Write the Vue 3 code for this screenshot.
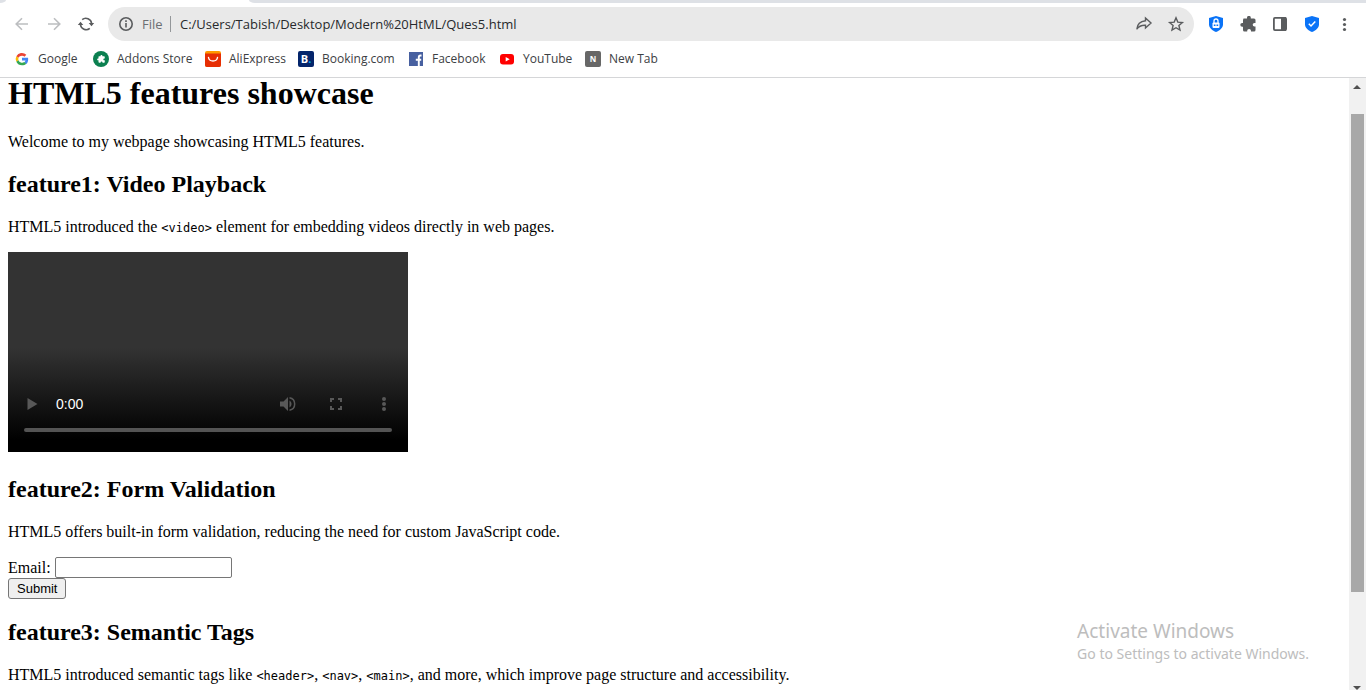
<script setup>
import { ref } from 'vue'

const address = ref('C:/Users/Tabish/Desktop/Modern%20HtML/Ques5.html')
const email = ref('')
const puzzle =
  'M3.500 2.500H7V1.800a1.900 1.900 0 0 1 3.800 0v.7H14q1.500 0 1.500 1.500v3h-1a1.800 1.800 0 0 0 0 3.600h1V14q0 1.500-1.500 1.500h-3v-.7a1.900 1.900 0 0 0-3.800 0v.7H4.500Q3 15.500 3 14v-3.300h-.8a1.900 1.900 0 0 1 0-3.800H3V4Z'
</script>

<template>
  <div class="window">
    <header class="chrome">
      <div class="tabstrip"><span class="rest left"></span><span class="tab"></span><span class="rest right"></span></div>
      <div class="toolbar">
        <button class="tool dim" aria-label="Back">
          <svg width="16" height="16" viewBox="0 0 16 16" class="line"><path d="M14 8H2.500M8 2.200 2.200 8 8 13.800" /></svg>
        </button>
        <button class="tool dim" aria-label="Forward">
          <svg width="16" height="16" viewBox="0 0 16 16" class="line"><path d="M2 8h11.500M8 2.200 13.800 8 8 13.800" /></svg>
        </button>
        <button class="tool" aria-label="Reload">
          <svg width="16" height="16" viewBox="0 0 16 16" class="line">
            <path d="M4.200 3.600A5.800 5.800 0 0 1 13.600 7.500M11.800 12.400A5.800 5.800 0 0 1 2.400 8.500" />
            <path class="solid" d="M10.700 7H16.200L13.500 10.200ZM-.2 9H5.300L2.500 5.800Z" />
          </svg>
        </button>
        <div class="omnibox">
          <button class="info" aria-label="View site information">
            <svg width="16" height="16" viewBox="0 0 16 16" class="line"><circle cx="8" cy="8" r="6.200" /><path d="M8 7v4.500M8 4.300v1.700" /></svg>
          </button>
          <span class="scheme">File</span>
          <input v-model="address" class="address" type="text" aria-label="Address" />
          <button class="inner" aria-label="Share">
            <svg width="18" height="16" viewBox="0 0 18 16" class="line thin"><path d="M10.500 2 16 7l-5.500 5V9.200C6.500 9 3.500 10.500 1.800 13.200 2.200 8.800 5 5.400 10.500 4.800Z" /></svg>
          </button>
          <button class="inner" aria-label="Bookmark this page">
            <svg width="16" height="16" viewBox="0 0 16 16" class="line thin"><path d="m8 1.800 1.800 4.300 4.600.4-3.500 3 1.100 4.600-4-2.400-4 2.400 1.100-4.600-3.500-3 4.600-.4Z" /></svg>
          </button>
        </div>
        <button class="tool" aria-label="Privacy extension">
          <svg width="16" height="16" viewBox="0 0 16 16"><path fill="#0a73f7" d="M8 0 15 2v6.500c0 3.500-3.500 6-7 7.500-3.500-1.500-7-4-7-7.500V2Z" /><rect x="4.500" y="6.500" width="7" height="5.500" rx="1" fill="#fff" /><path d="M6 7V5a2 2 0 0 1 4 0v2" fill="none" stroke="#fff" stroke-width="1.300" /><path d="M5.800 9.200h1.200M7.500 9.200h1M9 9.200h1.200" stroke="#0a73f7" stroke-width="1.400" /></svg>
        </button>
        <button class="tool" aria-label="Extensions">
          <svg width="16" height="16" viewBox="0 0 16 16"><path fill="currentColor" :d="puzzle" /></svg>
        </button>
        <button class="tool" aria-label="Side panel">
          <svg width="16" height="16" viewBox="0 0 16 16"><rect x="1.900" y="1.900" width="12.200" height="12.200" rx="1" fill="none" stroke="currentColor" stroke-width="1.800" /><path fill="currentColor" d="M9 1h5v14H9Z" /></svg>
        </button>
        <button class="tool" aria-label="Security extension">
          <svg width="16" height="16" viewBox="0 0 16 16"><path fill="#0a73f7" d="M8 0 15 2v6.500c0 3.500-3.500 6-7 7.500-3.500-1.500-7-4-7-7.500V2Z" /><path d="m4.800 7.800 2.200 2.200 4.300-4.500" fill="none" stroke="#fff" stroke-width="1.500" /></svg>
        </button>
        <button class="tool" aria-label="Menu">
          <svg width="16" height="16" viewBox="0 0 16 16" fill="currentColor"><circle cx="8.500" cy="3.500" r="1.600" /><circle cx="8.500" cy="8.500" r="1.600" /><circle cx="8.500" cy="13.500" r="1.600" /></svg>
        </button>
      </div>
      <nav class="bookmarks" aria-label="Bookmarks">
        <a href="#">
          <svg width="16" height="16" viewBox="0 0 48 48"><path fill="#ea4335" d="M24 14c3 0 5.500 1 7.400 2.900l5.600-5.500A19 19 0 0 0 7 15.500l6.500 5C15 16.500 19 14 24 14Z" /><path fill="#4285f4" d="M42.500 24.500c0-1.500-.1-2.800-.4-4H24v8h10.500c-.5 2.500-2 4.500-4 5.800l6.300 5c3.700-3.500 5.700-8.500 5.700-14.800Z" /><path fill="#fbbc05" d="M13.500 27.500a11 11 0 0 1 0-7l-6.500-5a19 19 0 0 0 0 17Z" /><path fill="#34a853" d="M24 43c5.200 0 9.500-1.700 12.800-4.700l-6.300-5A11.500 11.500 0 0 1 13.500 27.500l-6.500 5A19 19 0 0 0 24 43Z" /></svg>
          Google
        </a>
        <a href="#">
          <svg width="16" height="16" viewBox="0 0 16 16"><circle cx="8" cy="8" r="8" fill="#0b8050" /><svg x="4" y="4" width="8" height="8" viewBox="0 0 16 16"><path fill="#fff" :d="puzzle" /></svg></svg>
          Addons Store
        </a>
        <a href="#">
          <svg width="16" height="16" viewBox="0 0 16 16"><rect width="16" height="16" rx="2" fill="#ff9a00" /><path fill="#e62e04" d="M0 2.500h16V14q0 2-2 2H2q-2 0-2-2Z" /><path d="M3.500 6.500q.5 3.500 4.500 3.500t4.500-3.500" fill="none" stroke="#fff" stroke-width="1.400" stroke-linecap="round" /></svg>
          AliExpress
        </a>
        <a href="#">
          <span class="badge booking">B<i>.</i></span>
          Booking.com
        </a>
        <a href="#">
          <svg width="16" height="16" viewBox="0 0 16 16"><path fill="#4760a0" d="M1 1h14v14H1Z" /><path d="M13.500 4.500h-1q-1.700 0-1.700 1.700V15M7.800 8.800h5.400" fill="none" stroke="#fff" stroke-width="1.900" /></svg>
          Facebook
        </a>
        <a href="#">
          <svg width="16" height="16" viewBox="0 0 16 16"><rect x="1" y="3" width="14" height="10.500" rx="3" fill="#f00" /><path fill="#fff" d="m6.700 6 4 2.200-4 2.300Z" /></svg>
          YouTube
        </a>
        <a href="#">
          <span class="badge newtab">N</span>
          New Tab
        </a>
      </nav>
    </header>

    <div class="viewport">
      <main class="page">
        <h1>HTML5 features showcase</h1>
        <p>Welcome to my webpage showcasing HTML5 features.</p>

        <h2>feature1: Video Playback</h2>
        <p>HTML5 introduced the <code>&lt;video&gt;</code> element for embedding videos directly in web pages.</p>
        <section class="player" aria-label="Video player">
          <div class="controls">
            <button aria-label="Play"><svg width="18" height="18" viewBox="0 0 18 18"><path d="M4.500 3v12l10-6Z" /></svg></button>
            <span class="time">0:00</span>
            <button aria-label="Mute"><svg width="18" height="18" viewBox="0 0 18 18"><path d="M1 6.500v5h3.500L9 16V2L4.500 6.500ZM10.500 5.500v7a4 4 0 0 0 0-7Z" /><path class="arc" d="M10.500 2.800a6.300 6.300 0 0 1 0 12.400" /></svg></button>
            <button aria-label="Full screen"><svg width="18" height="18" viewBox="0 0 18 18"><path d="M3 3h4v2H5v2H3ZM11 3h4v4h-2V5h-2ZM3 11h2v2h2v2H3ZM13 11h2v4h-4v-2h2Z" /></svg></button>
            <button aria-label="More options"><svg width="18" height="18" viewBox="0 0 18 18"><circle cx="9" cy="4" r="2" /><circle cx="9" cy="9" r="2" /><circle cx="9" cy="14" r="2" /></svg></button>
          </div>
          <div class="timeline"></div>
        </section>

        <h2>feature2: Form Validation</h2>
        <p>HTML5 offers built-in form validation, reducing the need for custom JavaScript code.</p>
        <form @submit.prevent>
          <div class="field">
            <label for="email">Email:</label>
            <input id="email" v-model="email" type="email" required />
          </div>
          <button class="submit" type="submit">Submit</button>
        </form>

        <h2>feature3: Semantic Tags</h2>
        <p>HTML5 introduced semantic tags like <code>&lt;header&gt;</code>, <code>&lt;nav&gt;</code>, <code>&lt;main&gt;</code>, and more, which improve page structure and accessibility.</p>
      </main>
      <div class="scrollbar" aria-hidden="true">
        <svg width="17" height="17" viewBox="0 0 17 17"><path d="M4 11h8L8 7Z" /></svg>
        <div class="track"><div class="thumb"></div></div>
        <svg width="17" height="17" viewBox="0 0 17 17"><path d="M4 13h8l-4 4Z" /></svg>
      </div>
    </div>

    <aside class="watermark">
      <div class="headline">Activate Windows</div>
      <div>Go to Settings to activate Windows.</div>
    </aside>
  </div>
</template>

<style>
body {
  margin: 0;
  background: #fff;
}
</style>

<style scoped>
.window {
  position: relative;
  display: flex;
  flex-direction: column;
  height: 100vh;
  overflow: hidden;
  background: #fff;
  color: #000;
}
svg {
  display: block;
  flex: none;
}
.chrome {
  flex: none;
  border-bottom: 1px solid #d5d6d8;
  font-family: "Open Sans", "Noto Sans", sans-serif;
  color: #3c4043;
}
.chrome button,
.player button {
  display: flex;
  align-items: center;
  justify-content: center;
  padding: 0;
  border: 0;
  background: none;
  color: inherit;
}
.tabstrip {
  display: flex;
  height: 3px;
}
.rest {
  background: #dee1e6;
}
.left {
  width: 6px;
  border-bottom-right-radius: 6px 3px;
}
.tab {
  width: 243px;
}
.right {
  flex: 1;
  border-bottom-left-radius: 6px 3px;
}
.toolbar {
  display: flex;
  align-items: center;
  height: 42px;
  padding: 0 6px;
}
.toolbar .tool,
.toolbar .inner,
.toolbar .info {
  color: #5a5c5e;
}
.toolbar .tool {
  width: 32px;
  height: 32px;
}
.toolbar .dim {
  color: #bcbec0;
}
.line {
  overflow: visible;
  fill: none;
  stroke: currentColor;
  stroke-width: 1.6;
}
.thin {
  stroke-width: 1.4;
}
.solid {
  fill: currentColor;
  stroke: none;
}
.omnibox {
  display: flex;
  flex: 1;
  align-items: center;
  height: 34px;
  margin: 0 6px;
  padding: 0 2px 0 10px;
  border-radius: 17px;
  background: #e9e9e9;
  font-size: 13px;
}
.scheme {
  width: 28px;
  margin-left: 8px;
  border-right: 1px solid #94979a;
  color: #6c6f73;
  line-height: 16px;
}
.address {
  flex: 1;
  min-width: 0;
  padding: 0 9px;
  border: 0;
  outline: 0;
  background: none;
  color: #27292c;
  font: inherit;
}
.omnibox .inner {
  width: 32px;
  height: 32px;
}
.bookmarks {
  display: grid;
  grid-template-columns: 79px 112px 93px 110px 91px 86px auto;
  align-items: center;
  height: 28px;
  padding: 0 0 4px 14px;
  font-size: 12px;
}
.bookmarks a {
  display: flex;
  align-items: center;
  gap: 8px;
  color: #3c4043;
  line-height: 16px;
  text-decoration: none;
  white-space: nowrap;
}
.badge {
  width: 16px;
  height: 16px;
  border-radius: 2px;
  color: #fff;
  font-weight: 700;
  text-align: center;
}
.booking {
  background: #04256b;
  font-size: 11px;
}
.booking i {
  color: #00b3f4;
  font-style: normal;
}
.newtab {
  background: #676767;
  font-size: 8px;
}
.viewport {
  display: flex;
  flex: 1;
  min-height: 0;
}
.page {
  flex: 1;
  min-width: 0;
  padding: 0 8px;
  font-family: "Liberation Serif", "Times New Roman", serif;
  font-size: 16px;
  line-height: 18px;
}
h1 {
  margin: 0 0 25px;
  font-size: 32px;
  line-height: 30px;
}
h2 {
  margin: 20px 0;
  font-size: 24px;
  line-height: 27px;
}
p {
  margin: 16px 0;
}
code {
  font-family: "DejaVu Sans Mono", monospace;
  font-size: 12px;
  line-height: 1;
}
.player {
  display: flex;
  flex-direction: column;
  justify-content: flex-end;
  width: 400px;
  height: 200px;
  margin-bottom: 24px;
  background: linear-gradient(#333 0 48%, #000 94%);
}
.controls {
  display: flex;
  align-items: center;
  height: 48px;
}
.controls button {
  width: 48px;
  height: 48px;
  color: #585858;
}
.controls svg {
  fill: currentColor;
}
.controls .arc {
  fill: none;
  stroke: currentColor;
  stroke-width: 1.5;
}
.time {
  flex: 1;
  color: #fff;
  font-family: "Liberation Sans", Arial, sans-serif;
  font-size: 14px;
}
.timeline {
  height: 4px;
  margin: 0 16px 20px;
  border-radius: 2px;
  background: #545454;
}
.field {
  display: flex;
  align-items: center;
  gap: 4px;
}
.field input {
  box-sizing: border-box;
  width: 177px;
  height: 21px;
  padding: 1px 2px;
  border: 1px solid #767676;
  border-radius: 2px;
  background: #fff;
}
.submit {
  display: block;
  box-sizing: border-box;
  height: 21px;
  padding: 0 8px;
  border: 1px solid #767676;
  border-radius: 3px;
  background: #efefef;
  color: #000;
  font-family: "Liberation Sans", Arial, sans-serif;
  font-size: 13px;
}
.scrollbar {
  display: flex;
  flex-direction: column;
  width: 17px;
  background: #f1f1f1;
}
.scrollbar svg {
  fill: #505050;
}
.track {
  flex: 1;
  padding: 19px 2px 0;
}
.thumb {
  height: 85.5%;
  background: #a8a8a8;
}
.watermark {
  position: absolute;
  right: 57px;
  bottom: 26px;
  color: #bdbdbd;
  font-family: "Noto Sans", "Open Sans", sans-serif;
  font-size: 14px;
  line-height: 20px;
}
.headline {
  font-size: 19px;
  line-height: 26px;
}
</style>
